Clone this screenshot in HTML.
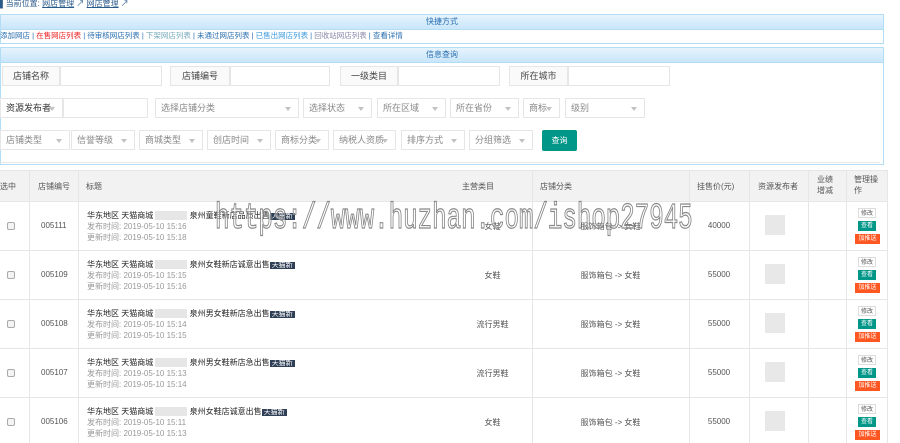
<!DOCTYPE html>
<html><head><meta charset="utf-8"><style>
*{box-sizing:border-box;margin:0;padding:0}
body{width:900px;height:443px;overflow:hidden;background:#fff;font-family:"Liberation Sans","Noto Sans CJK SC",sans-serif;font-size:9px;color:#333;position:relative}
.a{position:absolute}
.hd{background:linear-gradient(#e6f4fd,#c9e6fa);border:1px solid #b3dcf5;color:#2a6fb0;font-size:8px;text-align:center;line-height:14px}
.box{border:1px solid #e6e6e6;background:#fff;height:20px;line-height:18px;padding-left:5px;color:#888;font-size:9px}
.lbl{background:#fafafa;color:#444;text-align:center;padding:0}
.sel::after{content:"";position:absolute;right:7px;top:8px;border:3px solid transparent;border-top:4px solid #c2c2c2}
.th{background:#f2f2f2}
.vl{position:absolute;top:170px;height:273px;width:1px;background:#e6e6e6}
.hl{position:absolute;left:0;width:887px;height:1px;background:#e6e6e6}
.t{position:absolute;font-size:8px;color:#555}
.tag{background:#2f4056;color:#fff;font-size:7px;padding:0 2px}
.g{color:#999}
.btn{position:absolute;font-size:6px;text-align:center;line-height:10px;height:10px}
</style></head><body>
<div class="a" style="left:0;top:-2px;font-size:8px;color:#2a5a8a">▌当前位置: <u>网店管理</u> ↗ <u>网店管理</u> ↗</div>
<div class="a" style="left:0;top:14px;width:884px;height:30px;border:1px solid #b3dcf5"></div>
<div class="a hd" style="left:0;top:14px;width:884px;height:16px">快捷方式</div>
<div class="a" style="left:0;top:31px;font-size:7.5px;color:#2a6fb0;white-space:nowrap;line-height:10px">添加网店 | <span style="color:#e22">在售网店列表</span> | 待审核网店列表 | <span style="color:#7ab">下架网店列表</span> | 未通过网店列表 | <span style="color:#3a9ae0">已售出网店列表</span> | <span style="color:#88a">回收站网店列表</span> | 查看详情</div>
<div class="a" style="left:0;top:47px;width:884px;height:118px;border:1px solid #b3dcf5"></div>
<div class="a hd" style="left:0;top:47px;width:884px;height:16px">信息查询</div>
<div class="a box lbl" style="left:2px;top:66px;width:58px">店铺名称</div><div class="a box" style="left:60px;top:66px;width:102px"></div>
<div class="a box lbl" style="left:170px;top:66px;width:60px">店铺编号</div><div class="a box" style="left:230px;top:66px;width:100px"></div>
<div class="a box lbl" style="left:340px;top:66px;width:58px">一级类目</div><div class="a box" style="left:398px;top:66px;width:102px"></div>
<div class="a box lbl" style="left:509px;top:66px;width:59px">所在城市</div><div class="a box" style="left:568px;top:66px;width:102px"></div>
<div class="a box sel" style="left:0;top:98px;width:63px;color:#333">资源发布者</div><div class="a box" style="left:63px;top:98px;width:85px"></div>
<div class="a box sel" style="left:155px;top:98px;width:144px">选择店铺分类</div>
<div class="a box sel" style="left:303px;top:98px;width:69px">选择状态</div>
<div class="a box sel" style="left:377px;top:98px;width:69px">所在区域</div>
<div class="a box sel" style="left:450px;top:98px;width:69px">所在省份</div>
<div class="a box sel" style="left:523px;top:98px;width:37px">商标</div>
<div class="a box sel" style="left:565px;top:98px;width:80px">级别</div>
<div class="a box sel" style="left:0;top:130px;width:70px">店铺类型</div>
<div class="a box sel" style="left:71px;top:130px;width:64px">信誉等级</div>
<div class="a box sel" style="left:139px;top:130px;width:64px">商城类型</div>
<div class="a box sel" style="left:207px;top:130px;width:64px">创店时间</div>
<div class="a box sel" style="left:275px;top:130px;width:54px">商标分类</div>
<div class="a box sel" style="left:333px;top:130px;width:63px">纳税人资质</div>
<div class="a box sel" style="left:401px;top:130px;width:64px">排序方式</div>
<div class="a box sel" style="left:469px;top:130px;width:64px">分组筛选</div>
<div class="a" style="left:542px;top:130px;width:35px;height:21px;background:#009688;color:#fff;font-size:8px;text-align:center;line-height:21px;border-radius:2px">查询</div>
<div class="a" style="left:0;top:162px;width:880px;height:1px;background:#e6e6e6"></div>

<div class="a th" style="left:0;top:170px;width:887px;height:31px"></div>
<div class="vl" style="left:29px"></div><div class="vl" style="left:78px"></div><div class="vl" style="left:532px"></div><div class="vl" style="left:689px"></div><div class="vl" style="left:749px"></div><div class="vl" style="left:808px"></div><div class="vl" style="left:846px"></div><div class="vl" style="left:887px"></div>
<div class="hl" style="top:170px"></div><div class="hl" style="top:201px"></div><div class="hl" style="top:250px"></div><div class="hl" style="top:299px"></div><div class="hl" style="top:348px"></div><div class="hl" style="top:397px"></div>
<div class="t" style="left:0;top:181px">选中</div><div class="t" style="left:38px;top:181px">店铺编号</div><div class="t" style="left:86px;top:181px">标题</div><div class="t" style="left:462px;top:181px">主营类目</div><div class="t" style="left:540px;top:181px">店铺分类</div><div class="t" style="left:697px;top:181px">挂售价(元)</div><div class="t" style="left:758px;top:181px">资源发布者</div><div class="t" style="left:817px;top:174px;line-height:11px">业绩<br>增减</div><div class="t" style="left:854px;top:174px;line-height:11px">管理操<br>作</div>

<div id="rows"></div>
<script>
var d=[["005111","泉州童鞋新店品质出售","人需新","女鞋","服饰箱包 -> 女鞋","40000","15:16","15:18"],["005109","泉州女鞋新店诚意出售","天猫新","女鞋","服饰箱包 -> 女鞋","55000","15:15","15:16"],["005108","泉州男女鞋新店急出售","天猫新","流行男鞋","服饰箱包 -> 女鞋","55000","15:14","15:15"],["005107","泉州男女鞋新店急出售","天猫新","流行男鞋","服饰箱包 -> 女鞋","55000","15:13","15:14"],["005106","泉州女鞋店诚意出售","天猫新","女鞋","服饰箱包 -> 女鞋","55000","15:11","15:13"]];
var h="";d.forEach(function(r,i){var y=201+i*49;
h+='<div class="a" style="left:7px;top:'+(y+21)+'px;width:8px;height:8px;border:1px solid #aaa;border-radius:2px;background:#f4f4f4"></div>';
h+='<div class="t" style="left:41px;top:'+(y+20)+'px">'+r[0]+'</div>';
h+='<div class="t" style="left:87px;top:'+(y+9)+'px;color:#222;white-space:nowrap">华东地区 天猫商城 <span style="background:#e6e6e6;color:#e6e6e6">xxxxxxxx</span> '+r[1]+'<span class="tag">'+r[2]+'</span></div>';
h+='<div class="t g" style="left:87px;top:'+(y+20)+'px">发布时间: 2019-05-10 '+r[6]+'</div>';
h+='<div class="t g" style="left:87px;top:'+(y+31)+'px">更新时间: 2019-05-10 '+r[7]+'</div>';
h+='<div class="t" style="left:453px;width:79px;text-align:center;top:'+(y+20)+'px">'+r[3]+'</div>';
h+='<div class="t" style="left:532px;width:157px;text-align:center;top:'+(y+20)+'px">'+r[4]+'</div>';
h+='<div class="t" style="left:689px;width:60px;text-align:center;top:'+(y+20)+'px">'+r[5]+'</div>';
h+='<div class="a" style="left:765px;top:'+(y+14)+'px;width:20px;height:20px;background:#e8e8e8"></div>';
h+='<div class="btn" style="left:858px;top:'+(y+7)+'px;width:18px;border:1px solid #ddd;color:#555;background:#fff">修改</div>';
h+='<div class="btn" style="left:858px;top:'+(y+20)+'px;width:18px;background:#009688;color:#fff">查看</div>';
h+='<div class="btn" style="left:855px;top:'+(y+33)+'px;width:25px;background:#ff5722;color:#fff">加推送</div>';});
document.getElementById("rows").innerHTML=h;
</script>
<div class="a" style="left:215px;top:198px;font-family:'Liberation Mono',monospace;font-size:36px;color:rgba(255,255,255,.4);-webkit-text-stroke:1.2px #888;transform:scaleX(.67);transform-origin:0 0;white-space:nowrap">https://www.huzhan.com/ishop27945</div>
</body></html>
